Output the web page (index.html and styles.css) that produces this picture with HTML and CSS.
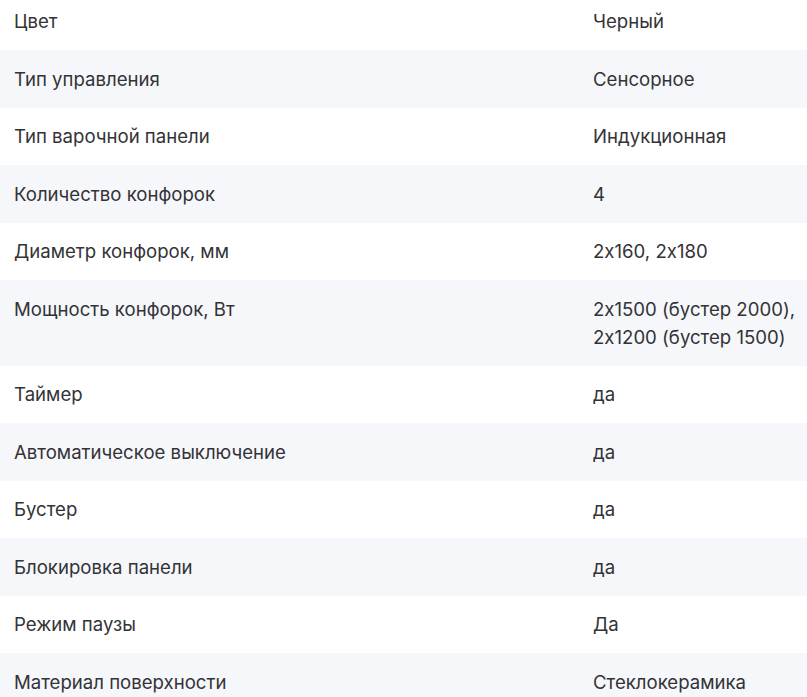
FILE: index.html
```html
<!DOCTYPE html>
<html lang="ru">
<head>
<meta charset="utf-8">
<title>Характеристики</title>
<link rel="stylesheet" href="styles.css">
</head>
<body>
<dl class="specs">
  <div class="spec-row"><dt class="spec-name">Цвет</dt><dd class="spec-value">Черный</dd></div>
  <div class="spec-row"><dt class="spec-name">Тип управления</dt><dd class="spec-value">Сенсорное</dd></div>
  <div class="spec-row"><dt class="spec-name">Тип варочной панели</dt><dd class="spec-value">Индукционная</dd></div>
  <div class="spec-row"><dt class="spec-name">Количество конфорок</dt><dd class="spec-value">4</dd></div>
  <div class="spec-row"><dt class="spec-name">Диаметр конфорок, мм</dt><dd class="spec-value">2x160, 2x180</dd></div>
  <div class="spec-row"><dt class="spec-name">Мощность конфорок, Вт</dt><dd class="spec-value">2x1500 (бустер 2000), 2x1200 (бустер 1500)</dd></div>
  <div class="spec-row"><dt class="spec-name">Таймер</dt><dd class="spec-value">да</dd></div>
  <div class="spec-row"><dt class="spec-name">Автоматическое выключение</dt><dd class="spec-value">да</dd></div>
  <div class="spec-row"><dt class="spec-name">Бустер</dt><dd class="spec-value">да</dd></div>
  <div class="spec-row"><dt class="spec-name">Блокировка панели</dt><dd class="spec-value">да</dd></div>
  <div class="spec-row"><dt class="spec-name">Режим паузы</dt><dd class="spec-value">Да</dd></div>
  <div class="spec-row"><dt class="spec-name">Материал поверхности</dt><dd class="spec-value">Стеклокерамика</dd></div>
</dl>
</body>
</html>
```
FILE: styles.css
```css
html, body {
  margin: 0;
  padding: 0;
  background: #ffffff;
}

body {
  font-family: Inter, "Noto Sans", sans-serif;
  font-size: 18.6px;
  font-weight: 400;
  line-height: 28px;
  color: #333336;
  font-feature-settings: "calt" 0;
  font-variant-ligatures: none;
}

.specs {
  margin: 0;
  display: flex;
  flex-direction: column;
}

.spec-row {
  display: grid;
  grid-template-columns: 579px 1fr;
  padding: 14.75px 0 14.75px 14px;
}

.spec-row:first-child {
  padding-top: 7.25px;
}

.spec-row:nth-child(even) {
  background: #f6f7fb;
}

.spec-name,
.spec-value {
  margin: 0;
}
```
